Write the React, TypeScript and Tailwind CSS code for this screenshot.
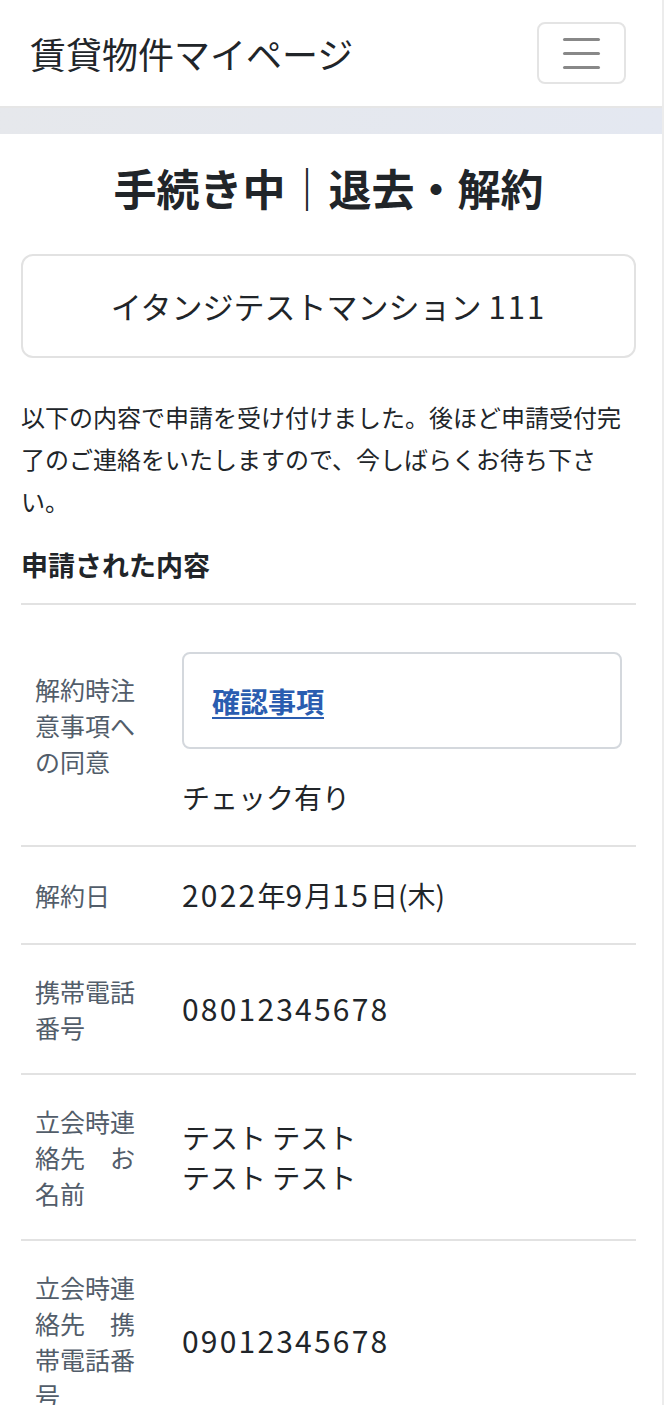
import React from "react";

type Row = {
  label: string;
  value: React.ReactNode;
};

// 数字だけ少し大きく・字間を広げる（元画面のフォントに幅を合わせる）
const Num: React.FC<{ text: string }> = ({ text }) => (
  <>
    {text.split(/(\d+)/).map((part, i) =>
      /^\d+$/.test(part) ? (
        <span key={i} className="text-[30px] leading-none tracking-[2.2px]">
          {part}
        </span>
      ) : (
        <span key={i}>{part}</span>
      )
    )}
  </>
);

const rows: Row[] = [
  {
    label: "解約時注意事項への同意",
    value: (
      <div>
        <div className="mt-[19px] mb-[28px] h-[97px] flex items-center pl-[28px] border-2 border-[#d4d8dd] rounded-[8px]">
          <a href="#" className="text-[28px] font-bold text-[#2a5db0] underline underline-offset-4">
            確認事項
          </a>
        </div>
        <div>チェック有り</div>
      </div>
    ),
  },
  { label: "解約日", value: <Num text="2022年9月15日(木)" /> },
  { label: "携帯電話番号", value: <Num text="08012345678" /> },
  {
    label: "立会時連絡先　お名前",
    value: (
      <div>
        <div>テスト テスト</div>
        <div>テスト テスト</div>
      </div>
    ),
  },
  { label: "立会時連絡先　携帯電話番号", value: <Num text="09012345678" /> },
];

const App: React.FC = () => {
  return (
    <div className="w-[664px] min-h-[1405px] bg-white border-r-2 border-[#ececec] font-['Noto_Sans_CJK_JP',sans-serif] text-[#212529]">
      {/* ヘッダー */}
      <header className="h-[108px] flex items-center justify-between pl-[30px] pr-[36px] border-b-2 border-[#e6e6e6]">
        <div className="text-[36px] leading-none">賃貸物件マイページ</div>
        <button className="w-[89px] h-[62px] border-2 border-[#e4e4e4] rounded-[8px] flex flex-col items-center justify-center gap-[11px]">
          <span className="block w-[37px] h-[3px] bg-[#888] rounded" />
          <span className="block w-[37px] h-[3px] bg-[#888] rounded" />
          <span className="block w-[37px] h-[3px] bg-[#888] rounded" />
        </button>
      </header>
      <div className="h-[26px] bg-gradient-to-r from-[#e6e8ec] to-[#e4e8f1]" />

      <main className="pl-[21px] pr-[26px]">
        <h1 className="mt-[28px] text-center text-[43px] leading-[50px] font-bold">
          手続き中｜退去・解約
        </h1>

        <div className="mt-[42px] h-[104px] flex items-center justify-center border-2 border-[#e2e2e2] rounded-[12px] text-[31px]">
          <span>
            イタンジテストマンション <span className="tracking-[2px]">111</span>
          </span>
        </div>

        <p className="mt-[38px] text-[24px] leading-[42px]">
          以下の内容で申請を受け付けました。後ほど申請受付完了のご連絡をいたしますので、今しばらくお待ち下さい。
        </p>

        <h2 className="mt-[23px] text-[27px] leading-[40px] font-bold">申請された内容</h2>

        <div className="mt-[18px] border-b-2 border-[#e2e2e2]">
          {rows.map((row, idx) => (
            <div
              key={idx}
              className="grid grid-cols-[161px_1fr] items-center border-t-2 border-[#e2e2e2] py-[28px]"
            >
              <div className="pl-[14px] pr-[40px] text-[25px] leading-[36px] text-[#525d6a]">
                {row.label}
              </div>
              <div className="pr-[14px] text-[28px] leading-[40px]">{row.value}</div>
            </div>
          ))}
        </div>
      </main>
    </div>
  );
};

export default App;
